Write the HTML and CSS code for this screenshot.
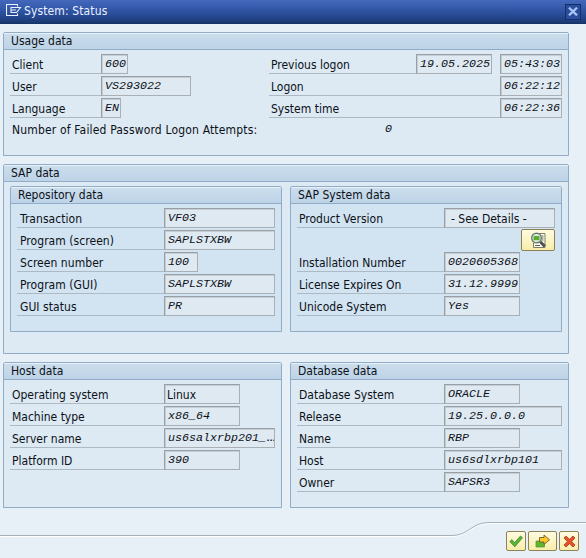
FILE: index.html
```html
<!DOCTYPE html>
<html lang="en">
<head>
<meta charset="utf-8">
<title>System: Status</title>
<link rel="stylesheet" href="styles.css">
</head>
<body>
<div class="dialog">
  <header class="titlebar">
    <svg class="title-icon" width="16" height="13" viewBox="0 0 16 13" fill="none" stroke="#e8f1ff" stroke-width="1.1"><path d="M11.5 2.5V.5H.5v11h11V9.500M5 3.5h9.500L10.500 8.5H5zM5 6h5"/></svg>
    <h1>System: Status</h1>
    <button class="close" aria-label="Close"><svg width="10" height="9" viewBox="0 0 10 9" stroke="#a9c6f8" stroke-width="2.3"><path d="M1 .7l8 7.6M9 .7L1 8.3"/></svg></button>
  </header>

  <main class="content">
    <section class="group usage">
      <h2>Usage data</h2>
      <div class="columns">
        <div class="rows left">
          <div class="row"><span class="label">Client</span><span class="field w27">600</span></div>
          <div class="row"><span class="label">User</span><span class="field w90">VS293022</span></div>
          <div class="row"><span class="label">Language</span><span class="field w20">EN</span></div>
        </div>
        <div class="rows right">
          <div class="row"><span class="label">Previous logon</span><span class="field w76">19.05.2025</span><span class="field w62 gap">05:43:03</span></div>
          <div class="row"><span class="label">Logon</span><span class="field w62">06:22:12</span></div>
          <div class="row"><span class="label">System time</span><span class="field w62">06:22:36</span></div>
        </div>
      </div>
      <div class="attempts"><span class="attempts-label">Number of Failed Password Logon Attempts:</span><span class="mono">0</span></div>
    </section>

    <section class="group sap">
      <h2>SAP data</h2>
      <div class="pair">
        <section class="group inner repository">
          <h2>Repository data</h2>
          <div class="rows">
            <div class="row"><span class="label">Transaction</span><span class="field w111">VF03</span></div>
            <div class="row"><span class="label">Program (screen)</span><span class="field w111">SAPLSTXBW</span></div>
            <div class="row"><span class="label">Screen number</span><span class="field w34">100</span></div>
            <div class="row"><span class="label">Program (GUI)</span><span class="field w111">SAPLSTXBW</span></div>
            <div class="row"><span class="label">GUI status</span><span class="field w111">PR</span></div>
          </div>
        </section>
        <section class="group inner">
          <h2>SAP System data</h2>
          <div class="rows">
            <div class="row"><span class="label">Product Version</span><span class="field plain details w111">- See Details -</span></div>
            <div class="row button-row">
              <button class="btn find" aria-label="Details"><svg width="17" height="17" viewBox="0 0 17 17"><path d="M5 1.5h10v14H3.5V11" fill="#fffef0" stroke="#777f6c"/><path d="M11.5 4h2M11.5 6h2M11.5 8h2M5 13.5h5" stroke="#5a6654"/><circle cx="6.5" cy="6" r="4.8" fill="#dff0d5" stroke="#6c7a78" stroke-width="1.4"/><path d="M3.5 4h6v4.2h-6z" fill="#59ad37"/><path d="M10.3 9.7l4.5 4.8" stroke="#4c5454" stroke-width="3"/></svg></button>
            </div>
            <div class="row"><span class="label">Installation Number</span><span class="field w76">0020605368</span></div>
            <div class="row"><span class="label">License Expires On</span><span class="field w76">31.12.9999</span></div>
            <div class="row"><span class="label">Unicode System</span><span class="field w76">Yes</span></div>
          </div>
        </section>
      </div>
    </section>

    <div class="pair bottom">
      <section class="group">
        <h2>Host data</h2>
        <div class="rows host">
          <div class="row"><span class="label">Operating system</span><span class="field plain w76">Linux</span></div>
          <div class="row"><span class="label">Machine type</span><span class="field w76">x86_64</span></div>
          <div class="row"><span class="label">Server name</span><span class="field w111">us6salxrbp201_<span class="dots">...</span></span></div>
          <div class="row"><span class="label">Platform ID</span><span class="field w76">390</span></div>
        </div>
      </section>
      <section class="group">
        <h2>Database data</h2>
        <div class="rows">
          <div class="row"><span class="label">Database System</span><span class="field w76">ORACLE</span></div>
          <div class="row"><span class="label">Release</span><span class="field w118">19.25.0.0.0</span></div>
          <div class="row"><span class="label">Name</span><span class="field w76">RBP</span></div>
          <div class="row"><span class="label">Host</span><span class="field w118">us6sdlxrbp101</span></div>
          <div class="row"><span class="label">Owner</span><span class="field w76">SAPSR3</span></div>
        </div>
      </section>
    </div>
  </main>

  <footer class="footer">
    <svg class="footer-line" width="586" height="16" viewBox="0 0 586 16" fill="none"><path d="M0 14.5H452C469 14.5 471 1.500 489 1.500H586" stroke="#fff"/><path d="M0 13.500H452C469 13.500 471 .5 489 .5H586" stroke="#a3b1bc"/></svg>
    <div class="actions">
      <button class="btn" aria-label="Continue"><svg width="14" height="13" viewBox="0 0 14 13"><path d="M.8 6.500L3 4.700l2.500 3L11.500 1l2 1.700L5.800 11.800z" fill="#5cb43a" stroke="#3f8129" stroke-width=".8"/></svg></button>
      <button class="btn wide" aria-label="Navigate"><svg width="16" height="14" viewBox="0 0 16 14"><path d="M1 7h8.500v6H1z" fill="#62b52e" stroke="#4b962a" stroke-width=".7"/><path d="M4.500 3.500H9V1l5.500 4.800L9 10.500V8H4.500z" fill="#ffc928" stroke="#6e5a28" stroke-width=".9"/></svg></button>
      <button class="btn" aria-label="Cancel"><svg width="13" height="13" viewBox="0 0 13 13"><path d="M1 3l2-2 3.500 3.300L10 1l2 2-3.300 3.500L12 10l-2 2-3.500-3.300L3 12l-2-2 3.300-3.500z" fill="#e4512a" stroke="#a93a1e" stroke-width=".8"/></svg></button>
    </div>
  </footer>
</div>
</body>
</html>
```
FILE: styles.css
```css
* { box-sizing: border-box; }

body {
  margin: 0;
  font-family: "DejaVu Sans Condensed", "DejaVu Sans", sans-serif;
  font-stretch: condensed;
  font-size: 12px;
  color: #0c1118;
}

.dialog {
  display: flex;
  flex-direction: column;
  width: 586px;
  height: 558px;
  background: #e8f0f7;
  overflow: hidden;
}

.titlebar {
  display: flex;
  align-items: center;
  height: 24px;
  padding: 0 3px 0 6px;
  background: linear-gradient(#4468bb, #3559ab 35%, #24468d 75%, #19386f);
  border-bottom: 1px solid #15336a;
}

.title-icon { margin-top: -3px; }

.titlebar h1 {
  flex: 1;
  margin: -2px 0 0 2px;
  font-size: 12px;
  font-weight: 400;
  letter-spacing: 0.12px;
  color: #e8f1ff;
}

.close {
  display: flex;
  align-items: center;
  justify-content: center;
  width: 16px;
  height: 16px;
  margin-right: 2px;
  padding: 0;
  background: #2a4d9c;
  border: 1px solid #14306c;
}

.content {
  flex: 1;
  padding: 8px 17px 0 3px;
}

.group {
  height: 146px;
  border: 1px solid #91acc6;
  border-radius: 2px 2px 0 0;
  background: #dde9f3;
}

.group h2 {
  height: 17px;
  margin: 0;
  padding-left: 7px;
  border-top: 1px solid #e8f2fa;
  border-bottom: 1px solid #91acc6;
  background: linear-gradient(#cbddec, #bdd3e7);
  font-size: 12px;
  font-weight: 400;
  line-height: 15px;
}

.usage { height: 124px; }

.sap {
  height: 190px;
  margin-top: 8px;
}

.pair {
  display: grid;
  grid-template-columns: 279px 279px;
  gap: 8px;
}

.sap .pair {
  grid-template-columns: 272px 272px;
  padding: 4px 6px 0;
}

.bottom { margin-top: 8px; }
.inner { background: #d2e3f1; }

.columns {
  display: flex;
  justify-content: space-between;
}

.rows { padding: 4px 6px 0; }
.left { width: 200px; }
.right { width: 305px; }

.row {
  display: flex;
  height: 20px;
  margin-bottom: 2px;
}

.label {
  flex: 0 0 147px;
  padding-left: 2px;
  border-bottom: 1px solid #adb9c3;
  line-height: 22px;
  white-space: nowrap;
}

.left .label { flex: 0 0 91px; }
.right .label { flex: 1; }
.host .label { flex: 0 0 154px; }

.repository .label {
  padding-left: 3px;
  letter-spacing: 0.05px;
}

.field {
  padding-left: 3px;
  border: 1px solid #a8b0b6;
  border-top-color: #989fa5;
  border-left-color: #989fa5;
  box-shadow: inset 1px 1px 0 #c6ced5;
  background: #dfe9f2;
  white-space: nowrap;
  overflow: hidden;
}

.field,
.mono {
  font-family: "Liberation Mono", monospace;
  font-size: 11.67px;
  font-style: italic;
  line-height: 19px;
}

.plain {
  padding-left: 2px;
  font: 12px/20px "DejaVu Sans Condensed", "DejaVu Sans", sans-serif;
}

.details { padding-left: 6px; }

.dots {
  margin-left: -1px;
  letter-spacing: -4px;
}

.gap { margin-left: 8px; }

.w20 { width: 20px; }
.w27 { width: 27px; }
.w34 { width: 34px; }
.w62 { width: 62px; }
.w76 { width: 76px; }
.w90 { width: 90px; }
.w111 { width: 111px; }
.w118 { width: 118px; }

.attempts {
  display: flex;
  padding-left: 8px;
  line-height: 21px;
}

.attempts-label {
  width: 373px;
  letter-spacing: 0.17px;
}

.button-row { justify-content: flex-end; }

.btn {
  display: flex;
  align-items: center;
  justify-content: center;
  width: 20px;
  height: 20px;
  padding: 0;
  border: 1px solid #8d8157;
  border-radius: 2px;
  background: linear-gradient(#fffbe0, #f8eda8);
}

.find {
  width: 34px;
  height: 22px;
  margin-top: -1px;
}

.wide { width: 29px; }

.footer { height: 36px; }

.footer-line { display: block; }

.actions {
  display: flex;
  gap: 2px;
  justify-content: flex-end;
  margin-top: -7px;
  padding-right: 7px;
}
```
